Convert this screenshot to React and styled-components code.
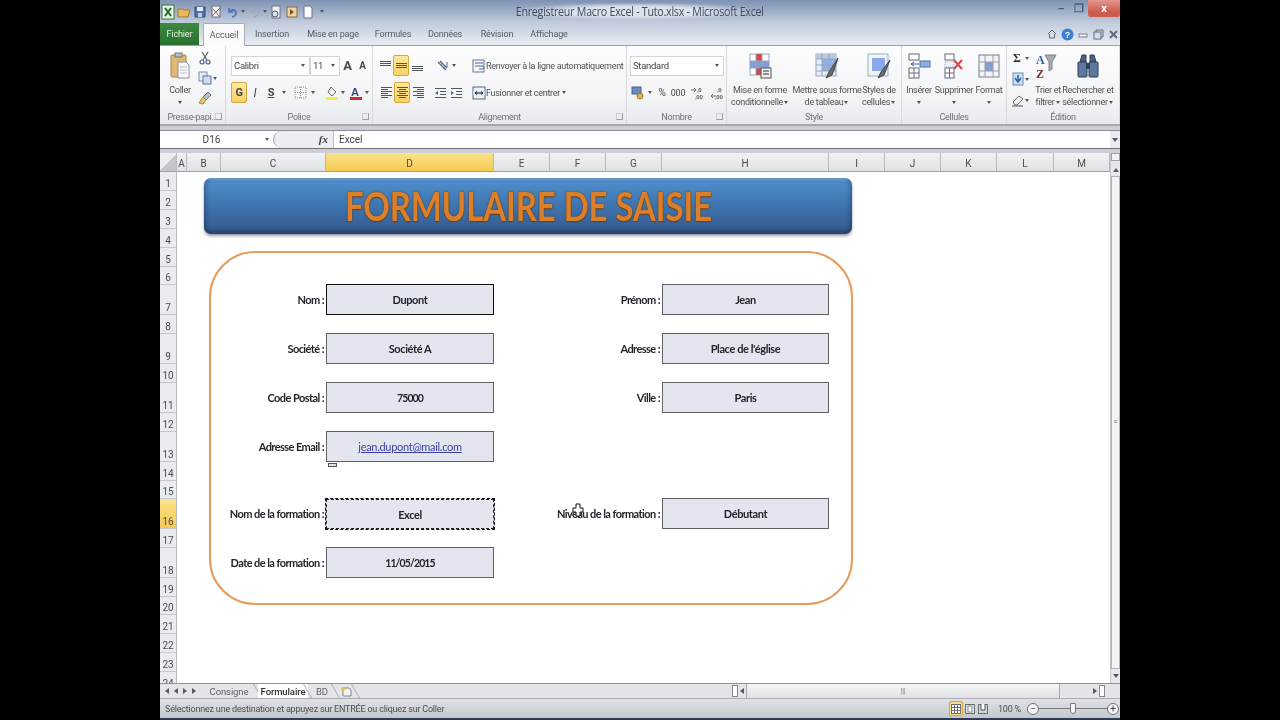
import React from 'react';
import styled, { createGlobalStyle } from 'styled-components';

const GlobalStyle = createGlobalStyle`
  html, body { margin: 0; padding: 0; background: #000; }
  body { width: 1280px; height: 720px; overflow: hidden; font-family: Roboto, "Liberation Sans", sans-serif; }
`;

const COLUMNS = [
  ['A', 10], ['B', 34], ['C', 105], ['D', 168], ['E', 56], ['F', 56], ['G', 56],
  ['H', 167], ['I', 56], ['J', 56], ['K', 56], ['L', 57], ['M', 56],
];
const ROWS = [19, 19, 19, 19, 19, 18, 30, 19, 30, 19, 30, 19, 30, 19, 18, 30, 19, 30, 19, 18, 19, 19, 19, 19];

const FIELDS = [
  { row: 7, col: 5, label: 'Nom :', value: 'Dupont', dark: true },
  { row: 9, col: 5, label: 'Société :', value: 'Société A' },
  { row: 11, col: 5, label: 'Code Postal :', value: '75000', tight: true },
  { row: 13, col: 5, label: 'Adresse Email :', value: 'jean.dupont@mail.com', link: true },
  { row: 16, col: 5, label: 'Nom de la formation :', value: 'Excel', active: true },
  { row: 18, col: 5, label: 'Date de la formation :', value: '11/05/2015', tight: true },
  { row: 7, col: 9, label: 'Prénom :', value: 'Jean' },
  { row: 9, col: 9, label: 'Adresse :', value: "Place de l'église" },
  { row: 11, col: 9, label: 'Ville :', value: 'Paris' },
  { row: 16, col: 9, label: 'Niveau de la formation :', value: 'Débutant' },
];

const Page = styled.div`
  width: 1280px;
  height: 720px;
  background: #000;
  display: flex;
  justify-content: center;
`;

const Win = styled.div`
  width: 960px;
  height: 720px;
  display: flex;
  flex-direction: column;
  background: #d6dbe3;
  color: #3c3f45;
  filter: blur(0.45px);
`;

const TitleBar = styled.div`
  height: 23px;
  flex: none;
  display: flex;
  align-items: center;
  background: linear-gradient(#7f93b5, #c2ccdc);
`;

const Quick = styled.div`
  width: 340px;
  display: flex;
  align-items: center;
  gap: 2px;
  padding-left: 1px;
  box-sizing: border-box;
`;

const TitleText = styled.div`
  flex: none;
  width: 268px;
  margin-left: 1px;
  text-align: center;
  font-family: "Open Sans", sans-serif;
  font-size: 12px;
  letter-spacing: -0.28px;
  color: #3f4a5c;
  white-space: nowrap;
  transform: scaleX(0.89);
  background: radial-gradient(ellipse at center, #dbe2ec 40%, transparent 75%);
`;

const WinButtons = styled.div`
  margin-left: auto;
  height: 100%;
  display: flex;
  align-items: flex-start;
`;

const WinBtn = styled.div`
  width: ${(p) => p.$w}px;
  height: 17px;
  display: flex;
  align-items: center;
  justify-content: center;
  color: ${(p) => (p.$close ? '#fff' : '#4c5a70')};
  font-size: 11px;
  font-weight: 700;
  border-radius: 0 0 3px 3px;
  background: ${(p) => (p.$close ? 'linear-gradient(#e2988c, #cf5a4e 70%)' : 'transparent')};
`;

const TabBar = styled.div`
  height: 23px;
  flex: none;
  display: flex;
  align-items: flex-end;
  background: linear-gradient(#c2ccdc, #e9edf3);
  border-bottom: 1px solid #9aa0a8;
  box-sizing: border-box;
  font-size: 9px;
  letter-spacing: -0.15px;
`;

const FileTab = styled.div`
  width: 39px;
  height: 22px;
  margin-right: 4px;
  display: flex;
  align-items: center;
  justify-content: center;
  color: #e4f0e0;
  background: linear-gradient(#3c8a40, #28702f);
`;

const Tab = styled.div`
  width: ${(p) => p.$w}px;
  height: 22px;
  display: flex;
  align-items: center;
  justify-content: center;
  color: #555b64;
  white-space: nowrap;
  box-sizing: border-box;
  ${(p) => p.$on && 'background: #fbfbfc; border: 1px solid #a8adb4; border-bottom: 0; margin-bottom: -1px; height: 23px; border-radius: 2px 2px 0 0;'}
`;

const TabTools = styled.div`
  margin-left: auto;
  height: 22px;
  display: flex;
  align-items: center;
  gap: 4px;
  padding-right: 1px;
`;

const Ribbon = styled.div`
  height: 80px;
  flex: none;
  display: flex;
  background: linear-gradient(#fdfdfe, #f2f3f5 70%, #e8eaed);
  border-bottom: 2px solid #a4a7ac;
  box-sizing: border-box;
  font-size: 9px;
  letter-spacing: -0.3px;
  color: #4d5158;
`;

const Group = styled.div`
  width: ${(p) => p.$w}px;
  flex: none;
  position: relative;
  display: flex;
  flex-direction: column;
  border-right: 1px solid #d8dade;
  box-sizing: border-box;
`;

const GroupBody = styled.div`
  height: 64px;
  flex: none;
  display: flex;
  padding: ${(p) => p.$pad || '0'};
  box-sizing: border-box;
`;

const GroupName = styled.div`
  flex: 1;
  display: flex;
  align-items: center;
  justify-content: center;
  color: #6d7178;
  white-space: nowrap;
`;

const Launcher = styled.span`
  position: absolute;
  right: 3px;
  bottom: 4px;
  width: 5px;
  height: 5px;
  border: 1px solid #9a9ea5;
  border-top-color: #c9ccd0;
  border-left-color: #c9ccd0;
`;

const BigBtn = styled.div`
  width: ${(p) => p.$w}px;
  flex: none;
  display: flex;
  flex-direction: column;
  align-items: center;
  padding-top: 6px;
  box-sizing: border-box;
`;

const BigIcon = styled.div`
  height: 28px;
  display: flex;
  align-items: center;
  justify-content: center;
`;

const BigLabel = styled.div`
  margin-top: 4px;
  line-height: 12px;
  text-align: center;
  white-space: nowrap;
`;

const Caret = styled.span`
  display: inline-block;
  flex: none;
  width: 0;
  height: 0;
  margin: 0 ${(p) => p.$m ?? 2}px;
  border-left: 2px solid transparent;
  border-right: 2px solid transparent;
  border-top: 3px solid #55585e;
  vertical-align: middle;
`;

const Stack = styled.div`
  display: flex;
  flex-direction: column;
  flex: none;
  gap: ${(p) => p.$gap || 0}px;
  padding-top: ${(p) => p.$top || 0}px;
  width: ${(p) => (p.$w ? `${p.$w}px` : 'auto')};
`;

const Line = styled.div`
  display: flex;
  align-items: center;
  height: ${(p) => p.$h || 21}px;
`;

const Combo = styled.div`
  width: ${(p) => p.$w}px;
  height: 20px;
  flex: none;
  display: flex;
  align-items: center;
  justify-content: space-between;
  padding: 0 2px;
  box-sizing: border-box;
  background: #fff;
  border: 1px solid #d3d5d9;
  font-size: 9.5px;
  color: #43464c;
`;

const Tool = styled.div`
  width: ${(p) => p.$w || 16}px;
  height: 21px;
  margin-left: ${(p) => p.$ml || 0}px;
  display: flex;
  align-items: center;
  justify-content: center;
  flex: none;
  box-sizing: border-box;
  border-radius: 2px;
  color: #45484e;
  font-size: ${(p) => p.$fs || 11}px;
  ${(p) => p.$on && 'background: linear-gradient(#fde9a0, #f9d167); border: 1px solid #d9a63c;'}
`;

const WideBtn = styled.div`
  display: flex;
  align-items: center;
  height: 21px;
  white-space: nowrap;
`;

const FormulaBar = styled.div`
  height: 27px;
  flex: none;
  padding: 4px 0;
  box-sizing: border-box;
  background: #ccd0d6;
`;

const FormulaInner = styled.div`
  height: 19px;
  display: flex;
  align-items: center;
  background: #fff;
  border-top: 1px solid #8a8e94;
  border-bottom: 1px solid #6f7378;
  box-sizing: border-box;
  font-size: 10px;
  line-height: 19px;
  color: #3f4248;
`;

const NameBox = styled.div`
  width: 113px;
  height: 100%;
  padding-right: 2px;
  display: flex;
  align-items: center;
  box-sizing: border-box;
`;

const NameText = styled.span`
  flex: 1;
  text-align: center;
`;

const FxZone = styled.div`
  width: 61px;
  height: 100%;
  display: flex;
  align-items: center;
  justify-content: flex-end;
  padding-right: 5px;
  box-sizing: border-box;
  background: #eceef1;
  border-right: 1px solid #bfc3c8;
  border-left: 1px solid #9a9ea4;
  border-radius: 10px 0 0 10px;
  font-family: "Liberation Serif", serif;
  font-style: italic;
  font-weight: 700;
  font-size: 11px;
`;

const FormulaText = styled.span`
  flex: 1;
  padding-left: 5px;
`;

const Expand = styled.div`
  width: 10px;
  height: 100%;
  background: #e8ebef;
  display: flex;
  align-items: center;
  justify-content: center;
`;

const Sheet = styled.div`
  height: 530px;
  flex: none;
  overflow: hidden;
  display: flex;
  background: #fff;
`;

const Grid = styled.div`
  width: 950px;
  flex: none;
  display: grid;
  grid-template-columns: 17px ${COLUMNS.map((c) => `${c[1]}px`).join(' ')};
  grid-template-rows: 19px ${ROWS.map((r) => `${r}px`).join(' ')};
  position: relative;
`;

const Corner = styled.div`
  grid-column: 1;
  grid-row: 1;
  background: linear-gradient(135deg, #eceef0 50%, #c2c5ca 50%);
  border-right: 1px solid #b5b8bd;
  border-bottom: 1px solid #9da0a6;
`;

const ColHead = styled.div`
  grid-row: 1;
  grid-column: ${(p) => p.$col};
  display: flex;
  align-items: center;
  justify-content: center;
  padding-top: 2px;
  box-sizing: border-box;
  font-size: 10px;
  color: #4a4d53;
  background: ${(p) => (p.$on ? 'linear-gradient(#fbe28c, #f6c94f)' : 'linear-gradient(#f0f2f4, #dfe2e6)')};
  border-right: 1px solid #b5b8bd;
  border-bottom: 1px solid #9da0a6;
`;

const RowHead = styled.div`
  grid-column: 1;
  grid-row: ${(p) => p.$row};
  display: flex;
  align-items: flex-end;
  justify-content: center;
  padding-bottom: 1px;
  box-sizing: border-box;
  font-size: 10px;
  color: #4a4d53;
  background: ${(p) => (p.$on ? 'linear-gradient(#fbe28c, #f6c94f)' : '#e9ebee')};
  border-right: 1px solid #b5b8bd;
  border-bottom: 1px solid #c4c7cc;
`;

const Banner = styled.div`
  grid-column: 3 / 11;
  grid-row: 2 / 6;
  margin: 6px 33px 14px 17px;
  padding-bottom: 2px;
  box-sizing: border-box;
  display: flex;
  align-items: center;
  justify-content: center;
  border-radius: 7px;
  background: linear-gradient(#7fb3e6 0, #4f8ccb 6%, #3f77b2 45%, #39639a 80%, #345683 100%);
  box-shadow: 0 2px 3px rgba(0, 0, 0, 0.4), inset 0 -3px 4px rgba(20, 40, 70, 0.35), inset 3px 0 4px rgba(20, 40, 70, 0.2), inset -3px 0 4px rgba(20, 40, 70, 0.2);
`;

const BannerText = styled.span`
  font-family: Lato, "Liberation Sans", sans-serif;
  font-size: 41px;
  font-weight: 700;
  white-space: nowrap;
  color: #dc7f2a;
  text-shadow: 0 0 2px #5a3a18, 0 1px 1px #6b451e;
  transform: scaleX(0.8);
`;

const Frame = styled.div`
  grid-column: 3 / 11;
  grid-row: 6 / 22;
  margin: 3px 32.5px 10px 21.5px;
  border: 2.5px solid #e59c5c;
  border-radius: 46px;
`;

const Label = styled.div`
  grid-row: ${(p) => p.$row};
  grid-column: ${(p) => p.$col};
  margin-top: -1px;
  display: flex;
  align-items: center;
  justify-content: flex-end;
  padding-right: 2px;
  white-space: nowrap;
  font-family: Lato, "Liberation Sans", sans-serif;
  font-weight: 700;
  font-size: 11px;
  letter-spacing: -0.57px;
  color: #22252a;
`;

const Field = styled.div`
  grid-row: ${(p) => p.$row};
  grid-column: ${(p) => p.$col};
  margin: ${(p) => (p.$active ? '-1px' : '-1px 0 0 0')};
  display: flex;
  align-items: center;
  justify-content: center;
  position: relative;
  box-sizing: border-box;
  background: #e3e6ef;
  border: ${(p) => (p.$active ? '1px dashed #111' : `1px solid ${p.$dark ? '#111' : '#5d6066'}`)};
  ${(p) => p.$active && 'outline: 1px dashed #222; outline-offset: -2px;'}
  font-family: Lato, "Liberation Sans", sans-serif;
  font-weight: ${(p) => (p.$link ? 400 : 700)};
  font-size: ${(p) => (p.$tight ? 10.5 : 11)}px;
  letter-spacing: ${(p) => (p.$tight ? -0.9 : p.$link ? -0.3 : -0.4)}px;
  color: ${(p) => (p.$link ? '#3a3fa6' : '#22252a')};
  text-decoration: ${(p) => (p.$link ? 'underline' : 'none')};
`;

const SmartTag = styled.span`
  position: absolute;
  left: 1px;
  top: calc(100% + 2px);
  width: 7px;
  height: 2px;
  border: 1px solid #555;
  background: #dfe2ea;
`;

const MouseCross = styled.svg`
  position: absolute;
  left: 412px;
  top: 350px;
`;

const VScroll = styled.div`
  width: 10px;
  flex: none;
  display: flex;
  flex-direction: column;
  align-items: center;
  background: #e5e8ed;
  border-left: 1px solid #c6c9ce;
  box-sizing: border-box;
`;

const SplitBox = styled.div`
  width: 9px;
  height: 8px;
  border: 1px solid #9da1a7;
  box-sizing: border-box;
  background: #f1f2f4;
  margin-bottom: 4px;
`;

const VThumb = styled.div`
  flex: 1;
  width: 9px;
  margin: 2px 0;
  display: flex;
  align-items: center;
  justify-content: center;
  color: #777;
  font-size: 7px;
  line-height: 3px;
  background: #f2f3f5;
  border: 1px solid #aeb1b6;
  box-sizing: border-box;
`;

const VArrow = styled.div`
  height: 9px;
  margin-bottom: ${(p) => p.$mb || 0}px;
  display: flex;
  align-items: center;
`;

const SheetTabs = styled.div`
  height: 15px;
  flex: none;
  display: flex;
  align-items: center;
  background: #e3e5e8;
  border-top: 1px solid #8f9298;
  box-sizing: border-box;
  font-size: 9.5px;
  letter-spacing: -0.1px;
  color: #55585e;
`;

const Nav = styled.div`
  width: 40px;
  padding-left: 3px;
  box-sizing: border-box;
  display: flex;
  gap: 1px;
`;

const SheetTab = styled.div`
  width: ${(p) => p.$w}px;
  height: 100%;
  position: relative;
  display: flex;
  align-items: center;
  justify-content: center;
  background: ${(p) => (p.$on ? '#fff' : 'transparent')};
  font-weight: ${(p) => (p.$on ? 500 : 400)};
  color: ${(p) => (p.$on ? '#2d3036' : '#5f6268')};
  box-sizing: border-box;

  &::after {
    content: '';
    position: absolute;
    right: 0;
    top: 0;
    bottom: 0;
    width: 1px;
    background: #a9acb1;
    transform: skewX(30deg);
  }
`;

const HScroll = styled.div`
  margin-left: auto;
  width: 388px;
  height: 100%;
  display: flex;
  align-items: center;
`;

const HThumb = styled.div`
  width: 314px;
  height: 100%;
  margin-right: 31px;
  flex: none;
  box-sizing: border-box;
  background: linear-gradient(#f5f6f7, #dfe1e4);
  border-left: 1px solid #a6a9ae;
  border-right: 1px solid #a6a9ae;
  display: flex;
  align-items: center;
  justify-content: center;
  color: #777;
  font-size: 7px;
`;

const Splitter = styled.div`
  width: 4px;
  height: 10px;
  flex: none;
  border: 1px solid #85888e;
  background: #fff;
`;

const StatusBar = styled.div`
  height: 20px;
  flex: none;
  display: flex;
  align-items: center;
  background: linear-gradient(#dfe2e6, #c4c8ce);
  border-top: 1px solid #aaadb2;
  box-sizing: border-box;
  padding-left: 5px;
  font-size: 9px;
  letter-spacing: -0.2px;
  color: #4b4e54;
`;

const StatusRight = styled.div`
  margin-left: auto;
  display: flex;
  align-items: center;
  height: 100%;
  padding-right: 1px;
`;

const ViewBtn = styled.div`
  width: ${(p) => (p.$on ? 14 : 13)}px;
  height: 15px;
  display: flex;
  align-items: center;
  justify-content: center;
  box-sizing: border-box;
  ${(p) => p.$on && 'background: #f9dc85; border: 1px solid #d9a63c; border-radius: 2px;'}
`;

const Zoom = styled.span`
  margin: 0 6px 0 9px;
  font-size: 9px;
  white-space: nowrap;
`;

const RoundBtn = styled.div`
  width: 10px;
  height: 10px;
  flex: none;
  border: 1px solid #70747a;
  border-radius: 50%;
  background: #f3f4f5;
  display: flex;
  align-items: center;
  justify-content: center;
  font-size: 10px;
  line-height: 10px;
  color: #444;
`;

const Slider = styled.div`
  width: 68px;
  height: 1px;
  background: #75797f;
  position: relative;
`;

const SliderKnob = styled.span`
  position: absolute;
  left: 31px;
  top: -5px;
  width: 4px;
  height: 9px;
  border: 1px solid #777;
  border-radius: 1px 1px 3px 3px;
  background: #f6f6f6;
`;

const BottomEdge = styled.div`
  height: 2px;
  flex: none;
  background: #2e3b52;
`;

/* petites icones du ruban */
const Svg = ({ w = 14, h = 14, children }) => (
  <svg width={w} height={h} viewBox={`0 0 ${w} ${h}`} style={{ flex: 'none' }}>{children}</svg>
);

const ExcelLogo = () => (
  <Svg w={14} h={16}>
    <rect x="1" y="1" width="12" height="14" fill="#e8f1e4" stroke="#3b7a3e" />
    <path d="M4 4l6 8M10 4l-6 8" stroke="#1f6b2c" strokeWidth="2" />
  </Svg>
);
const Folder = () => (
  <Svg><path d="M1 4h5l1 1h6l-2 7H1z" fill="#e7b95a" stroke="#a67c2c" /></Svg>
);
const Save = () => (
  <Svg><path d="M2 2h10v10H2z" fill="#4c6fb0" stroke="#2f4a80" /><rect x="4" y="2" width="6" height="4" fill="#e8edf5" /><rect x="5" y="8" width="4" height="4" fill="#c4cbd6" /></Svg>
);
const PrintMacro = () => (
  <Svg><rect x="3" y="1" width="8" height="11" fill="#f3f3f3" stroke="#6a7384" /><path d="M3 11l8-8M4 4l7 8" stroke="#b0553a" /></Svg>
);
const Undo = ({ color = '#4a74b8' }) => (
  <Svg><path d="M4 3v4h4M4 7c2-3 7-3 7 1 0 2-2 4-4 4" fill="none" stroke={color} strokeWidth="1.6" /></Svg>
);
const Preview = () => (
  <Svg><rect x="3" y="1" width="8" height="12" fill="#f4f4f6" stroke="#6a7384" /><circle cx="6" cy="9" r="3" fill="#cfe2f4" stroke="#55606e" /></Svg>
);
const Macro = () => (
  <Svg><rect x="2" y="2" width="10" height="10" fill="#e9d6a4" stroke="#8a6d35" /><path d="M5 4l4 3-4 3z" fill="#8a4a20" /></Svg>
);
const NewDoc = () => (
  <Svg><path d="M3 1h6l2 2v10H3z" fill="#fbfbfb" stroke="#6a7384" /></Svg>
);
const Clipboard = () => (
  <Svg w={20} h={28}>
    <rect x="1" y="3" width="15" height="22" rx="1" fill="#e2b873" stroke="#a8834a" />
    <rect x="5" y="1" width="7" height="4" fill="#b9bcc2" stroke="#777" />
    <path d="M8 10h8l3 3v13H8z" fill="#fbfbfb" stroke="#8d9199" />
    <path d="M10 15h7M10 18h7M10 21h7" stroke="#b9bcc2" />
  </Svg>
);
const Scissors = () => (
  <Svg>
    <path d="M4 1l5 8M10 1L5 9" stroke="#5a5f68" strokeWidth="1.2" />
    <circle cx="4" cy="11" r="2" fill="none" stroke="#3f5f8a" strokeWidth="1.2" />
    <circle cx="10" cy="11" r="2" fill="none" stroke="#3f5f8a" strokeWidth="1.2" />
  </Svg>
);
const Copy = () => (
  <Svg><rect x="1" y="1" width="8" height="9" fill="#e5edf7" stroke="#7d8da5" /><rect x="5" y="5" width="8" height="8" fill="#cfdded" stroke="#60789c" /></Svg>
);
const Brush = () => (
  <Svg><path d="M10 1l3 3-5 5-3-3z" fill="#b9bec6" stroke="#70757d" /><path d="M5 6l3 3-3 4-4-1z" fill="#e8c766" stroke="#a58a3c" /></Svg>
);
const Lines = ({ rows }) => (
  <Svg w={13} h={13}>
    {rows.map((row) => {
      const [y, x1, x2] = Array.isArray(row) ? row : [row, 1, 12];
      return <path key={y} d={`M${x1} ${y}.5H${x2}`} stroke="#50545b" />;
    })}
  </Svg>
);
const Orient = () => (
  <Svg><path d="M2 3l8 8M4 2l7 7" stroke="#5a6270" strokeWidth="1.4" /><path d="M11 3v5" stroke="#3a6db0" /></Svg>
);
const Indent = ({ flip }) => (
  <Svg w={13} h={13}>
    <path d="M1 2.5h11M6 5.5h6M6 8.5h6M1 11.5h11" stroke="#50545b" />
    <path d={flip ? 'M4 5v4L1 7z' : 'M1 5v4l3-2z'} fill="#3a6db0" />
  </Svg>
);
const Wrap = () => (
  <Svg><rect x="1" y="1" width="11" height="12" fill="#f4f5f7" stroke="#777" /><path d="M3 4h8M3 7h8a2 2 0 010 3H7" stroke="#3a6db0" fill="none" /></Svg>
);
const Merge = () => (
  <Svg><rect x="1" y="1" width="12" height="12" fill="#eef1f5" stroke="#5f6670" /><rect x="1" y="5" width="12" height="4" fill="#cfdff0" /><path d="M3 7h8M3 7l2-1.5M3 7l2 1.5M11 7L9 5.5M11 7L9 8.5" stroke="#223" fill="none" /></Svg>
);
const Borders = () => (
  <Svg w={13} h={13}><rect x="1" y="1" width="11" height="11" fill="none" stroke="#8a8d93" strokeDasharray="1 1" /><path d="M1 6.5h11M6.5 1v11" stroke="#8a8d93" strokeDasharray="1 1" /></Svg>
);
const FillColor = () => (
  <Svg>
    <path d="M6 1l5 5-4 4-4-4z" fill="#eef0f3" stroke="#666" />
    <rect x="1" y="11" width="12" height="3" fill="#f5ec3e" />
  </Svg>
);
const FontColor = () => (
  <Svg>
    <text x="2" y="10" fontSize="11" fontWeight="700" fontFamily="Liberation Sans" fill="#3b4d7a">A</text>
    <rect x="1" y="11" width="12" height="3" fill="#d22a30" />
  </Svg>
);
const Currency = () => (
  <Svg><rect x="1" y="1" width="9" height="7" fill="#6d8bc0" stroke="#46618e" /><circle cx="9" cy="10" r="3" fill="#e0b347" stroke="#9a7a2a" /></Svg>
);
const Decimals = ({ flip }) => (
  <Svg w={16} h={14}>
    <path d={flip ? 'M1 10h5M1 10l2-2M1 10l2 2' : 'M1 4h5M6 4L4 2M6 4L4 6'} stroke="#4d6f9c" fill="none" />
    <text x="7" y="6" fontSize="6" fontWeight="700" fontFamily="Liberation Sans" fill="#555">,0</text>
    <text x="5" y="13" fontSize="6" fontWeight="700" fontFamily="Liberation Sans" fill="#555">,00</text>
  </Svg>
);
const CondFormat = () => (
  <Svg w={24} h={28}>
    <rect x="2" y="2" width="19" height="21" fill="#fff" stroke="#9aa6b5" />
    <rect x="8" y="2" width="6" height="7" fill="#cf4a4a" />
    <rect x="2" y="9" width="19" height="7" fill="#7f9ed6" />
    <rect x="8" y="16" width="6" height="7" fill="#cf4a4a" />
    <path d="M8 2v21M14 2v21M2 9h19M2 16h19" stroke="#9aa6b5" />
    <rect x="13" y="16" width="10" height="10" fill="#eef0f3" stroke="#555" />
    <path d="M15 19h6M15 22h6" stroke="#333" />
  </Svg>
);
const TableBrush = () => (
  <Svg w={26} h={28}>
    <rect x="2" y="2" width="20" height="22" fill="#e6edf7" stroke="#95a5ba" />
    <rect x="2" y="2" width="20" height="5" fill="#b8c8de" />
    <rect x="8" y="7" width="14" height="12" fill="#8fb0e6" />
    <path d="M8 2v22M15 2v22M2 7h20M2 13h20M2 19h20" stroke="#95a5ba" />
    <path d="M24 6L15 20l-3 6 6-3z" fill="#6b6b6b" stroke="#444" />
  </Svg>
);
const CellBrush = () => (
  <Svg w={26} h={28}>
    <rect x="2" y="2" width="20" height="22" fill="#f1f4f8" stroke="#a0abba" />
    <rect x="6" y="6" width="13" height="13" fill="#8aa9ea" />
    <path d="M24 8L15 20l-3 6 6-3z" fill="#6b6b6b" stroke="#444" />
  </Svg>
);
const InsertCell = () => (
  <Svg w={24} h={28}>
    <rect x="2" y="2" width="10" height="6" fill="#fff" stroke="#667" />
    <rect x="2" y="16" width="10" height="10" fill="#fff" stroke="#667" />
    <path d="M7 16v10M2 21h10" stroke="#667" />
    <rect x="13" y="9" width="10" height="6" fill="#8fb0de" stroke="#55709a" />
    <path d="M12 12H4M4 12l3-2M4 12l3 2" stroke="#3a5d94" fill="none" />
  </Svg>
);
const DeleteCell = () => (
  <Svg w={24} h={28}>
    <rect x="3" y="2" width="9" height="6" fill="#fff" stroke="#667" />
    <rect x="3" y="9" width="9" height="6" fill="#eef1f5" stroke="#aab" strokeDasharray="1 1" />
    <rect x="3" y="16" width="9" height="10" fill="#fff" stroke="#667" />
    <path d="M7.5 16v10M3 21h9" stroke="#667" />
    <path d="M12 8l8 9M20 8l-8 9" stroke="#d8484a" strokeWidth="2" />
  </Svg>
);
const FormatCell = () => (
  <Svg w={24} h={28}>
    <rect x="2" y="3" width="20" height="22" fill="#f1f3f6" stroke="#7a8088" />
    <rect x="8" y="10" width="8" height="9" fill="#7f9ed6" />
    <path d="M8 3v22M16 3v22M2 10h20M2 19h20" stroke="#9aa0a8" />
  </Svg>
);
const Sigma = () => (
  <Svg><text x="2" y="11" fontSize="12" fontWeight="700" fontFamily="Liberation Serif" fill="#333">Σ</text></Svg>
);
const FillDown = () => (
  <Svg><rect x="2" y="1" width="10" height="12" fill="#cfdff2" stroke="#6c8ab0" /><path d="M7 3v6M4 6l3 4 3-4" fill="none" stroke="#2e5fa8" strokeWidth="1.5" /></Svg>
);
const Eraser = () => (
  <Svg><path d="M2 9l6-6 4 3-6 6H4z" fill="#f4f4f4" stroke="#666" /><path d="M1 13h11" stroke="#555" /></Svg>
);
const Binoculars = () => (
  <Svg w={24} h={28}>
    <path d="M4 10l2-7h4v7zM14 10V3h4l2 7z" fill="#4d5f7c" stroke="#2f3f58" />
    <rect x="2" y="10" width="9" height="15" rx="1" fill="#5d789f" stroke="#2f3f58" />
    <rect x="13" y="10" width="9" height="15" rx="1" fill="#5d789f" stroke="#2f3f58" />
    <rect x="10" y="11" width="4" height="6" fill="#2f3f58" />
  </Svg>
);
const SortFilter = () => (
  <Svg w={24} h={28}>
    <path d="M9 3h11l-4 7v7l-3 2v-9z" fill="#a7adb6" stroke="#7d838c" />
    <text x="0" y="12" fontSize="12" fontWeight="700" fontFamily="Liberation Serif" fill="#2f5f9e">A</text>
    <text x="0" y="26" fontSize="12" fontWeight="700" fontFamily="Liberation Serif" fill="#7a2f2f">Z</text>
  </Svg>
);
const GridView = () => (
  <Svg w={10} h={10}><rect x="0.5" y="0.5" width="9" height="9" fill="#fff" stroke="#6a6f76" /><path d="M3.5 0v10M6.5 0v10M0 3.5h10M0 6.5h10" stroke="#6a6f76" /></Svg>
);
const PageView = () => (
  <Svg w={10} h={10}><rect x="0.5" y="0.5" width="9" height="9" fill="#e7e9ec" stroke="#6a6f76" /><rect x="3" y="2" width="4" height="6" fill="#fff" stroke="#888" /></Svg>
);
const BreakView = () => (
  <Svg w={10} h={10}><rect x="0.5" y="0.5" width="9" height="9" fill="#cfd2d6" stroke="#6a6f76" /><path d="M3 0v6h4V0" fill="#fff" stroke="#555" /></Svg>
);
const Tri = ({ dir = 'down', c = '#55585e' }) => {
  const d = { down: 'M1 2h6L4 6z', up: 'M1 6h6L4 2z', left: 'M6 1v6L2 4z', right: 'M2 1v6l4-3z' }[dir];
  return <Svg w={8} h={8}><path d={d} fill={c} /></Svg>;
};

const App = () => (
  <Page>
    <GlobalStyle />
    <Win>
      <TitleBar>
        <Quick>
          <ExcelLogo />
          <Folder /><Save /><PrintMacro /><Undo /><Caret $m={0} /><Undo color="#a4a9b2" /><Caret $m={0} />
          <Preview /><Macro /><NewDoc /><Caret $m={3} />
        </Quick>
        <TitleText>Enregistreur Macro Excel - Tuto.xlsx - Microsoft Excel</TitleText>
        <WinButtons>
          <WinBtn $w={18}>–</WinBtn>
          <WinBtn $w={18}>❐</WinBtn>
          <WinBtn $w={32} $close>x</WinBtn>
        </WinButtons>
      </TitleBar>

      <TabBar>
        <FileTab>Fichier</FileTab>
        <Tab $w={42} $on>Accueil</Tab>
        <Tab $w={54}>Insertion</Tab>
        <Tab $w={68}>Mise en page</Tab>
        <Tab $w={52}>Formules</Tab>
        <Tab $w={52}>Données</Tab>
        <Tab $w={52}>Révision</Tab>
        <Tab $w={52}>Affichage</Tab>
        <TabTools>
          <Svg w={10} h={10}><path d="M1 5l4-4 4 4M2.5 5v4h5V5" fill="none" stroke="#5b6470" /></Svg>
          <Svg w={13} h={13}>
            <circle cx="6.5" cy="6.5" r="6" fill="#3f7fd0" />
            <text x="3.8" y="10" fontSize="9" fontWeight="700" fontFamily="Liberation Sans" fill="#fff">?</text>
          </Svg>
          <Svg w={11} h={10}><rect x="1" y="5" width="8" height="3" fill="#f1f3f6" stroke="#7a8492" /></Svg>
          <Svg w={11} h={11}><rect x="1" y="3" width="7" height="7" fill="none" stroke="#5f6a7a" /><path d="M3 3V1h7v7H8" fill="none" stroke="#5f6a7a" /></Svg>
          <Svg w={11} h={11}><path d="M2 2l7 7M9 2l-7 7" stroke="#5f6a7a" strokeWidth="2" /></Svg>
        </TabTools>
      </TabBar>

      <Ribbon>
        <Group $w={66}>
          <GroupBody $pad="0 0 0 2px">
            <BigBtn $w={36}>
              <BigIcon><Clipboard /></BigIcon>
              <BigLabel>Coller<br /><Caret /></BigLabel>
            </BigBtn>
            <Stack $top={5} $gap={6} $w={14}>
              <Scissors />
              <Line $h={14}><Copy /><Caret $m={1} /></Line>
              <Brush />
            </Stack>
          </GroupBody>
          <GroupName>Presse-papi...</GroupName>
          <Launcher />
        </Group>

        <Group $w={147}>
          <GroupBody $pad="9px 0 0 5px">
            <Stack $gap={6}>
              <Line>
                <Combo $w={79}>Calibri<Caret /></Combo>
                <Combo $w={30}>11<Caret /></Combo>
                <Tool $w={15} $fs={13}><b>A</b></Tool>
                <Tool $w={15} $fs={10}><b>A</b></Tool>
              </Line>
              <Line>
                <Tool $on><b>G</b></Tool>
                <Tool $fs={12}><i>I</i></Tool>
                <Tool><b><u>S</u></b></Tool>
                <Caret $m={3} />
                <Tool $ml={3}><Borders /></Tool>
                <Caret $m={3} />
                <Tool $ml={6}><FillColor /></Tool>
                <Caret $m={1} />
                <Tool $ml={2}><FontColor /></Tool>
                <Caret $m={1} />
              </Line>
            </Stack>
          </GroupBody>
          <GroupName>Police</GroupName>
          <Launcher />
        </Group>

        <Group $w={254}>
          <GroupBody $pad="9px 0 0 4px">
            <Stack $gap={6} $w={95}>
              <Line>
                <Tool><Lines rows={[2, 4, 6]} /></Tool>
                <Tool $on><Lines rows={[4, 6, 8]} /></Tool>
                <Tool><Lines rows={[7, 9, 11]} /></Tool>
                <Tool $ml={10}><Orient /></Tool>
                <Caret $m={1} />
              </Line>
              <Line>
                <Tool $ml={1}><Lines rows={[1, 3, 5, 7, 9, 11].map((y, i) => [y, 1, i % 2 ? 8 : 12])} /></Tool>
                <Tool $on><Lines rows={[1, 3, 5, 7, 9, 11].map((y, i) => [y, i % 2 ? 3 : 1, i % 2 ? 10 : 12])} /></Tool>
                <Tool><Lines rows={[1, 3, 5, 7, 9, 11].map((y, i) => [y, i % 2 ? 5 : 1, 12])} /></Tool>
                <Tool $ml={7} $w={15}><Indent flip /></Tool>
                <Tool $ml={1} $w={15}><Indent /></Tool>
              </Line>
            </Stack>
            <Stack $gap={6}>
              <WideBtn><Wrap />Renvoyer à la ligne automatiquement</WideBtn>
              <WideBtn><Merge />Fusionner et centrer<Caret /></WideBtn>
            </Stack>
          </GroupBody>
          <GroupName>Alignement</GroupName>
          <Launcher />
        </Group>

        <Group $w={100}>
          <GroupBody $pad="9px 0 0 3px">
            <Stack $gap={6}>
              <Line><Combo $w={94}>Standard<Caret /></Combo></Line>
              <Line>
                <Tool><Currency /></Tool>
                <Caret />
                <Tool $fs={10}>%</Tool>
                <Tool $fs={9}>000</Tool>
                <Tool $ml={2} $w={20}><Decimals /></Tool>
                <Tool $w={20}><Decimals flip /></Tool>
              </Line>
            </Stack>
          </GroupBody>
          <GroupName>Nombre</GroupName>
          <Launcher />
        </Group>

        <Group $w={175}>
          <GroupBody>
            <BigBtn $w={66}>
              <BigIcon><CondFormat /></BigIcon>
              <BigLabel>Mise en forme<br />conditionnelle<Caret $m={1} /></BigLabel>
            </BigBtn>
            <BigBtn $w={68}>
              <BigIcon><TableBrush /></BigIcon>
              <BigLabel>Mettre sous forme<br />de tableau<Caret $m={1} /></BigLabel>
            </BigBtn>
            <BigBtn $w={36}>
              <BigIcon><CellBrush /></BigIcon>
              <BigLabel>Styles de<br />cellules<Caret $m={1} /></BigLabel>
            </BigBtn>
          </GroupBody>
          <GroupName>Style</GroupName>
        </Group>

        <Group $w={105}>
          <GroupBody>
            <BigBtn $w={34}>
              <BigIcon><InsertCell /></BigIcon>
              <BigLabel>Insérer<br /><Caret /></BigLabel>
            </BigBtn>
            <BigBtn $w={36}>
              <BigIcon><DeleteCell /></BigIcon>
              <BigLabel>Supprimer<br /><Caret /></BigLabel>
            </BigBtn>
            <BigBtn $w={34}>
              <BigIcon><FormatCell /></BigIcon>
              <BigLabel>Format<br /><Caret /></BigLabel>
            </BigBtn>
          </GroupBody>
          <GroupName>Cellules</GroupName>
        </Group>

        <Group $w={113}>
          <GroupBody $pad="0 0 0 4px">
            <Stack $top={5} $gap={7} $w={16}>
              <Line $h={14}><Sigma /><Caret $m={0} /></Line>
              <Line $h={14}><FillDown /><Caret $m={0} /></Line>
              <Line $h={14}><Eraser /><Caret $m={0} /></Line>
            </Stack>
            <BigBtn $w={42}>
              <BigIcon><SortFilter /></BigIcon>
              <BigLabel>Trier et<br />filtrer<Caret $m={1} /></BigLabel>
            </BigBtn>
            <BigBtn $w={38}>
              <BigIcon><Binoculars /></BigIcon>
              <BigLabel>Rechercher et<br />sélectionner<Caret $m={1} /></BigLabel>
            </BigBtn>
          </GroupBody>
          <GroupName>Édition</GroupName>
        </Group>
      </Ribbon>

      <FormulaBar>
        <FormulaInner>
          <NameBox><NameText>D16</NameText><Caret /></NameBox>
          <FxZone>fx</FxZone>
          <FormulaText>Excel</FormulaText>
          <Expand><Tri /></Expand>
        </FormulaInner>
      </FormulaBar>

      <Sheet>
        <Grid>
          <Corner />
          {COLUMNS.map(([name], i) => (
            <ColHead key={name} $col={i + 2} $on={name === 'D'}>{name}</ColHead>
          ))}
          {ROWS.map((_, i) => (
            <RowHead key={i} $row={i + 2} $on={i === 15}>{i + 1}</RowHead>
          ))}
          <Frame />
          <Banner><BannerText>FORMULAIRE DE SAISIE</BannerText></Banner>
          {FIELDS.map((f) => (
            <React.Fragment key={f.label}>
              <Label $row={f.row + 1} $col={f.col - 1}>{f.label}</Label>
              <Field $row={f.row + 1} $col={f.col} $dark={f.dark} $link={f.link} $active={f.active} $tight={f.tight}>
                {f.value}
                {f.link && <SmartTag />}
              </Field>
            </React.Fragment>
          ))}
          <MouseCross width="12" height="14" viewBox="0 0 12 14">
            <path d="M4 1h4v4h3v4H8v4H4V9H1V5h3z" fill="#fff" stroke="#111" />
          </MouseCross>
        </Grid>
        <VScroll>
          <SplitBox />
          <VArrow><Tri dir="up" /></VArrow>
          <VThumb>≡</VThumb>
          <VArrow $mb={3}><Tri /></VArrow>
        </VScroll>
      </Sheet>

      <SheetTabs>
        <Nav>
          <Tri dir="left" /><Tri dir="left" /><Tri dir="right" /><Tri dir="right" />
        </Nav>
        <SheetTab $w={58}>Consigne</SheetTab>
        <SheetTab $w={50} $on>Formulaire</SheetTab>
        <SheetTab $w={28}>BD</SheetTab>
        <SheetTab $w={20}>
          <Svg w={12} h={11}><path d="M3 2h6l2 2v6H3z" fill="#f4f4f4" stroke="#7c8088" /><circle cx="3" cy="3" r="2" fill="#e7c24f" /></Svg>
        </SheetTab>
        <HScroll>
          <Splitter />
          <Tri dir="left" />
          <HThumb>|||</HThumb>
          <Tri dir="right" />
          <Splitter />
        </HScroll>
      </SheetTabs>

      <StatusBar>
        Sélectionnez une destination et appuyez sur ENTRÉE ou cliquez sur Coller
        <StatusRight>
          <ViewBtn $on><GridView /></ViewBtn>
          <ViewBtn><PageView /></ViewBtn>
          <ViewBtn><BreakView /></ViewBtn>
          <Zoom>100 %</Zoom>
          <RoundBtn>−</RoundBtn>
          <Slider><SliderKnob /></Slider>
          <RoundBtn>+</RoundBtn>
        </StatusRight>
      </StatusBar>
      <BottomEdge />
    </Win>
  </Page>
);

export default App;
